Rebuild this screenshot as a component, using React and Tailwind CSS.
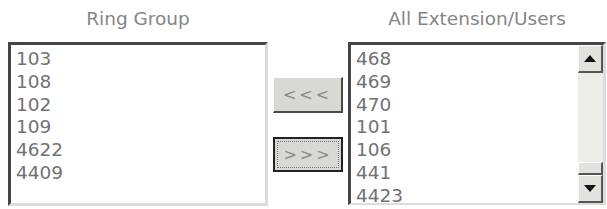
import React from "react";

const ringGroup = ["103", "108", "102", "109", "4622", "4409"];
const allUsers = ["468", "469", "470", "101", "106", "441", "4423"];

const font = { fontFamily: '"DejaVu Sans", Verdana, sans-serif' };

const Title = ({ children }) => (
    <div className="h-[42px] pt-[8px] text-center text-[18.5px] text-[#858585] leading-[21.5px]">
        {children}
    </div>
);

const Rows = ({ items }) => (
    <div className="pl-[5px] pt-[3px] text-[18.5px] leading-[22.8px] text-[#727272]">
        {items.map((i) => (
            <div key={i}>{i}</div>
        ))}
    </div>
);

const App = () => {
    return (
        <div className="w-[607px] h-[209px] bg-white flex pl-[8px] gap-[5px] overflow-hidden" style={font}>
            {/* left list */}
            <div className="w-[260px] flex flex-col">
                <Title>{"Ring Group"}</Title>
                <div className="h-[164px] border-t-[3px] border-l-[3px] border-t-[#454545] border-l-[#454545] border-r-[3px] border-b-[3px] border-r-[#dcdcdc] border-b-[#dcdcdc] overflow-hidden">
                    <Rows items={ringGroup} />
                </div>
            </div>

            {/* move buttons */}
            <div className="w-[70px] flex flex-col pt-[77px]">
                <div className="h-[36px] bg-[#d8d8d4] border-t border-l border-white border-r-[2px] border-b-[2px] border-r-[#4a4a4a] border-b-[#4a4a4a] flex items-center justify-center text-[16px] text-[#8a8a8a] tracking-[3px]">
                    {"<<<"}
                </div>
                <div className="mt-[24px] h-[35px] border-[2px] border-[#222] bg-[#d8d8d4] p-[2px]">
                    <div className="w-full h-full border border-dotted border-[#777] flex items-center justify-center text-[16px] text-[#8a8a8a] tracking-[3px]">
                        {">>>"}
                    </div>
                </div>
            </div>

            {/* right list */}
            <div className="w-[258px] flex flex-col">
                <Title>{"All Extension/Users"}</Title>
                <div className="h-[163px] flex border-t-[3px] border-l-[3px] border-t-[#454545] border-l-[#454545] border-r-[3px] border-b-[2px] border-r-[#dcdcdc] border-b-[#dcdcdc] overflow-hidden">
                    <div className="flex-1 overflow-hidden">
                        <Rows items={allUsers} />
                    </div>
                    <div className="w-[25px] flex flex-col bg-[#ecece8]">
                        <div className="h-[28px] bg-[#e2e2de] border-t border-l border-white border-r-[2px] border-b-[2px] border-r-[#555] border-b-[#555] flex items-center justify-center">
                            <svg width="12" height="7" viewBox="0 0 12 7">
                                <path d="M0 7 L6 0 L12 7 Z" fill="#111" />
                            </svg>
                        </div>
                        <div className="flex-1" />
                        <div className="h-[13px] bg-[#e2e2de] border-t border-l border-white border-r-[2px] border-b-[2px] border-r-[#555] border-b-[#555]" />
                        <div className="h-[28px] bg-[#e2e2de] border-t border-l border-white border-r-[2px] border-b-[2px] border-r-[#555] border-b-[#555] flex items-center justify-center">
                            <svg width="12" height="7" viewBox="0 0 12 7">
                                <path d="M0 0 L12 0 L6 7 Z" fill="#111" />
                            </svg>
                        </div>
                    </div>
                </div>
            </div>
        </div>
    );
};

export default App;
